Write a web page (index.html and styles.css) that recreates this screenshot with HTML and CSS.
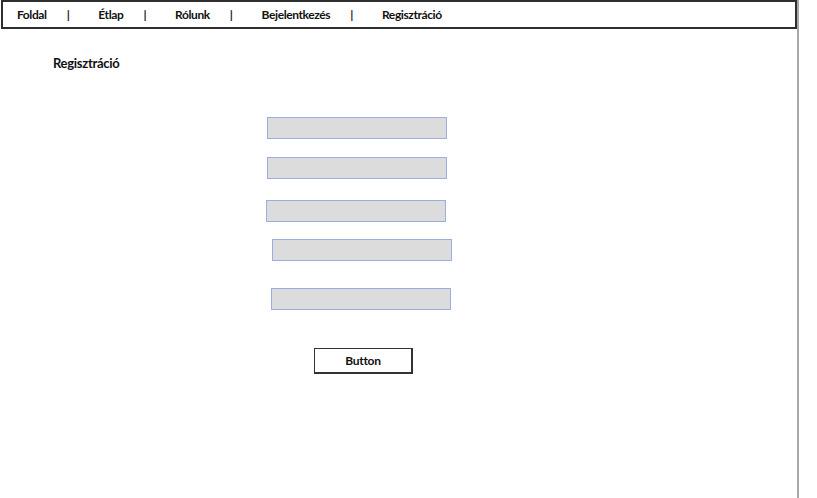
FILE: index.html
```html
<!DOCTYPE html>
<html lang="hu">
<head>
<meta charset="utf-8">
<title>Regisztráció</title>
<link rel="stylesheet" href="styles.css">
</head>
<body>
<div class="page">
  <nav class="nav">
    <span class="nav-item">Foldal</span><span class="sep">|</span>
    <span class="nav-item">Étlap</span><span class="sep">|</span>
    <span class="nav-item">Rólunk</span><span class="sep">|</span>
    <span class="nav-item">Bejelentkezés</span><span class="sep">|</span>
    <span class="nav-item">Regisztráció</span>
  </nav>
  <h1 class="title">Regisztráció</h1>
  <form class="form">
    <input class="field f1" type="text">
    <input class="field f2" type="text">
    <input class="field f3" type="text">
    <input class="field f4" type="text">
    <input class="field f5" type="text">
    <button class="btn" type="button">Button</button>
  </form>
</div>
</body>
</html>
```
FILE: styles.css
```css
html, body {
  margin: 0;
  padding: 0;
  background: #fff;
}
body {
  font-family: Lato, "Open Sans", sans-serif;
  color: #111;
  width: 817px;
  height: 498px;
  overflow: hidden;
}
.page {
  width: 797px;
  height: 498px;
  border-right: 2px solid #a8a8a8;
  box-sizing: content-box;
}
.nav {
  display: flex;
  align-items: center;
  height: 29px;
  margin-left: 1px;
  width: 796px;
  box-sizing: border-box;
  border: 2px solid #2e2e2e;
  padding: 0 0 1px 14px;
  font-weight: 700;
  font-size: 12px;
  letter-spacing: -0.4px;
  color: #111;
}
.nav-item {
  white-space: nowrap;
}
.sep {
  margin: 0 29px 0 20px;
  font-weight: 700;
  color: #222;
}
.title {
  margin: 25px 0 0 53px;
  font-size: 13px;
  font-weight: 700;
  letter-spacing: -0.3px;
  line-height: 18px;
}
.form {
  display: flex;
  flex-direction: column;
  align-items: flex-start;
  margin: 0;
  padding: 0;
}
.field {
  display: block;
  width: 180px;
  height: 22px;
  box-sizing: border-box;
  background: #dcdcdc;
  border: 1px solid #9aaee4;
  padding: 0;
  margin: 0;
}
.f1 { margin: 45px 0 0 267px; }
.f2 { margin: 18px 0 0 267px; }
.f3 { margin: 21px 0 0 266px; }
.f4 { margin: 17px 0 0 272px; }
.f5 { margin: 27px 0 0 271px; }
.btn {
  margin: 38px 0 0 314px;
  width: 99px;
  height: 26px;
  box-sizing: border-box;
  background: #fff;
  border: 1px solid #333;
  border-right-width: 2px;
  border-bottom-width: 2px;
  font-family: Lato, "Open Sans", sans-serif;
  font-weight: 700;
  font-size: 12px;
  letter-spacing: -0.3px;
  color: #111;
  padding: 0;
}
```
